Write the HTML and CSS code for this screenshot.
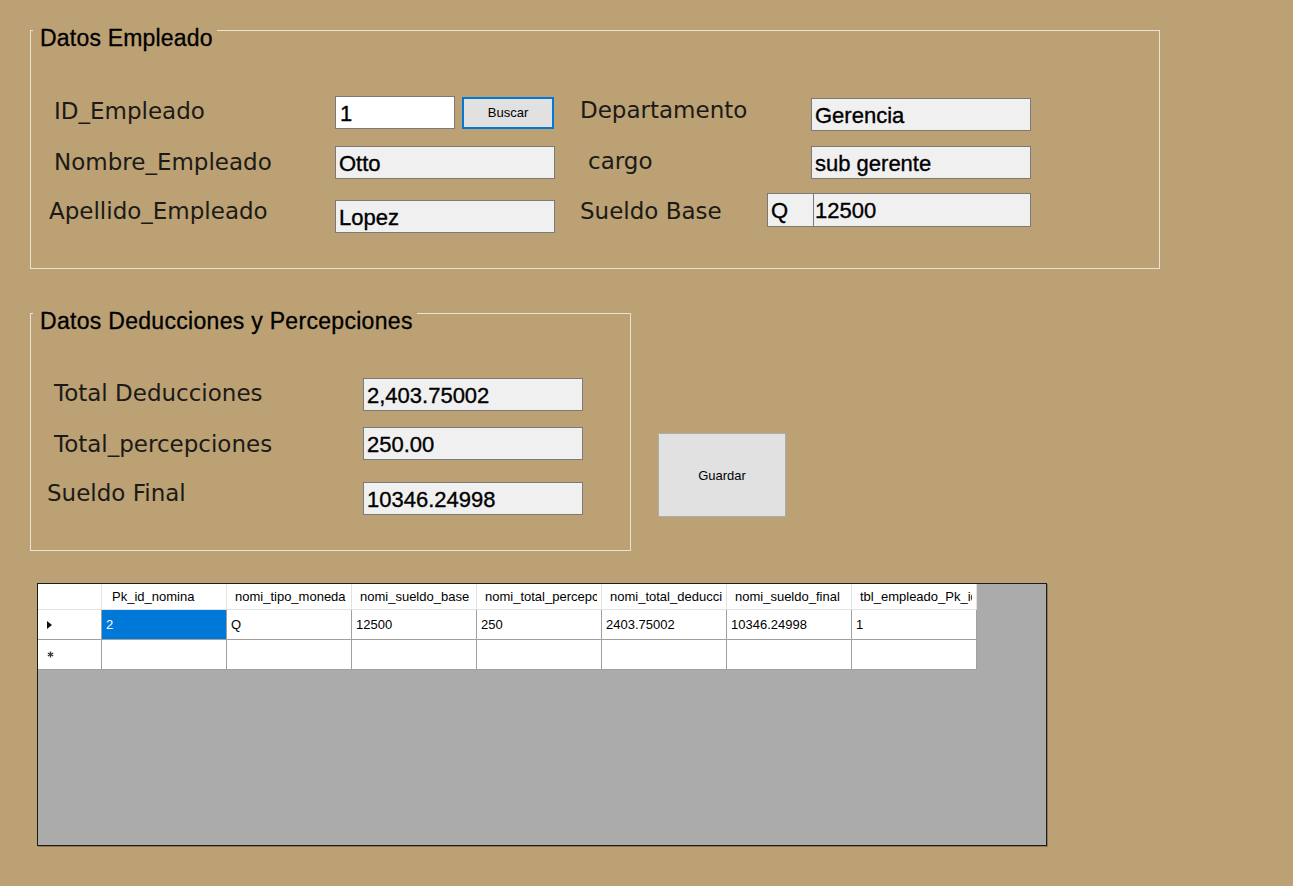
FILE: index.html
```html
<!DOCTYPE html>
<html lang="es">
<head>
<meta charset="utf-8">
<title>Nómina</title>
<link rel="stylesheet" href="styles.css">
</head>
<body>
<div class="page">
  <section class="group emp">
    <div class="group-title">Datos Empleado</div>
    <div class="col">
      <div class="row">
        <span class="lbl lbl-l lift-2">ID_Empleado</span>
        <div class="tb tb-id white">1</div>
        <button class="btn btn-search">Buscar</button>
      </div>
      <div class="row gap17">
        <span class="lbl lbl-l">Nombre_Empleado</span>
        <div class="tb tb-w">Otto</div>
      </div>
      <div class="row gap21">
        <span class="lbl lbl-l2 lift-5">Apellido_Empleado</span>
        <div class="tb tb-w">Lopez</div>
      </div>
    </div>
    <div class="col col-right">
      <div class="row">
        <span class="lbl lbl-r lift-4">Departamento</span>
        <div class="tb tb-w">Gerencia</div>
      </div>
      <div class="row gap15">
        <span class="lbl lbl-r2 lift-2">cargo</span>
        <div class="tb tb-w">sub gerente</div>
      </div>
      <div class="row row-tall gap14">
        <span class="lbl lbl-r3 drop-1">Sueldo Base</span>
        <div class="tb tb-q">Q</div>
        <div class="tb tb-amount">12500</div>
      </div>
    </div>
  </section>

  <div class="lower">
    <section class="group ded">
      <div class="group-title title-wide">Datos Deducciones y Percepciones</div>
      <div class="row">
        <span class="lbl lbl-d lift-2">Total Deducciones</span>
        <div class="tb tb-w">2,403.75002</div>
      </div>
      <div class="row gap16">
        <span class="lbl lbl-d drop-1">Total_percepciones</span>
        <div class="tb tb-w">250.00</div>
      </div>
      <div class="row gap22">
        <span class="lbl lbl-d2 lift-5">Sueldo Final</span>
        <div class="tb tb-w">10346.24998</div>
      </div>
    </section>
    <button class="btn btn-save">Guardar</button>
  </div>

  <div class="grid">
    <div class="grid-table">
      <div class="corner"></div>
      <div class="hc hc-first"><span class="hc-text">Pk_id_nomina</span></div>
      <div class="hc"><span class="hc-text">nomi_tipo_moneda</span></div>
      <div class="hc"><span class="hc-text">nomi_sueldo_base</span></div>
      <div class="hc"><span class="hc-text">nomi_total_percepciones</span></div>
      <div class="hc"><span class="hc-text">nomi_total_deducciones</span></div>
      <div class="hc"><span class="hc-text">nomi_sueldo_final</span></div>
      <div class="hc"><span class="hc-text">tbl_empleado_Pk_id_empleado</span></div>

      <div class="rh">
        <svg class="arrow" width="5" height="8" viewBox="0 0 5 8"><polygon points="0,0 5,4 0,8" fill="#111"/></svg>
      </div>
      <div class="c sel">2</div>
      <div class="c">Q</div>
      <div class="c">12500</div>
      <div class="c">250</div>
      <div class="c">2403.75002</div>
      <div class="c">10346.24998</div>
      <div class="c">1</div>

      <div class="rh">
        <svg class="star" width="7" height="7" viewBox="0 0 7 7"><g stroke="#333" stroke-width="1.3"><line x1="3.5" y1="0.5" x2="3.5" y2="6.5"/><line x1="0.8" y1="2" x2="6.2" y2="5"/><line x1="0.8" y1="5" x2="6.2" y2="2"/></g></svg>
      </div>
      <div class="c"></div>
      <div class="c"></div>
      <div class="c"></div>
      <div class="c"></div>
      <div class="c"></div>
      <div class="c"></div>
      <div class="c"></div>
    </div>
  </div>
</div>
</body>
</html>
```

FILE: styles.css
```css
* {
  box-sizing: border-box;
  margin: 0;
  padding: 0;
}

html, body {
  width: 1293px;
  height: 886px;
  overflow: hidden;
}

body {
  background: #bba174;
  font-family: "Liberation Sans", Arial, sans-serif;
  color: #000;
}

.page {
  padding-top: 30px;
}

/* group boxes */
.group {
  position: relative;
  border: 1px solid #e9e2d5;
}

.group-title {
  position: absolute;
  top: -5px;
  left: 2px;
  padding: 0 4px 0 7px;
  background: #bba174;
  font-size: 23px;
  line-height: 24px;
  letter-spacing: 0.2px;
  color: #000;
  white-space: nowrap;
  -webkit-text-stroke: 0.3px #000;
}

.title-wide {
  letter-spacing: 0.3px;
}

.emp {
  margin-left: 30px;
  width: 1130px;
  height: 239px;
  padding-top: 65px;
  display: grid;
  grid-template-columns: 549px 1fr;
  align-items: start;
}

.col {
  display: flex;
  flex-direction: column;
}

.col-right {
  padding-top: 2px;
}

.row {
  display: flex;
  align-items: center;
  height: 33px;
}

.row-tall {
  height: 34px;
}

.gap14 { margin-top: 14px; }
.gap15 { margin-top: 15px; }
.gap16 { margin-top: 16px; }
.gap17 { margin-top: 17px; }
.gap21 { margin-top: 21px; }
.gap22 { margin-top: 22px; }

/* labels */
.lbl {
  flex: none;
  font-family: "DejaVu Sans", "Noto Sans", sans-serif;
  font-size: 23px;
  line-height: 27px;
  color: #1c1a16;
  white-space: nowrap;
}

.lift-2 { margin-bottom: 3px; }
.lift-4 { margin-bottom: 9px; }
.lift-5 { margin-bottom: 11px; }
.drop-1 { margin-top: 2px; }

.lbl-l { margin-left: 23px; width: 281px; }
.lbl-l2 { margin-left: 18px; width: 286px; }
.lbl-r { width: 231px; }
.lbl-r2 { margin-left: 8px; width: 223px; }
.lbl-r3 { width: 187px; }
.lbl-d { margin-left: 23px; width: 309px; }
.lbl-d2 { margin-left: 16px; width: 316px; }

/* text boxes */
.tb {
  flex: none;
  height: 33px;
  border: 1px solid #7a7a7a;
  background: #f0f0f0;
  font-size: 22px;
  line-height: 29px;
  padding: 2px 3px 0;
  white-space: nowrap;
  overflow: hidden;
  color: #000;
  -webkit-text-stroke: 0.35px #000;
}

.row-tall .tb {
  height: 34px;
}

.white {
  background: #fff;
}

.tb-id { width: 120px; padding-left: 4px; }
.tb-w { width: 220px; }
.tb-q { width: 47px; }
.tb-amount { width: 218px; margin-left: -1px; padding-left: 1px; }

/* buttons */
.btn {
  flex: none;
  font-family: "Liberation Sans", Arial, sans-serif;
  font-size: 13px;
  color: #000;
  background: #e1e1e1;
  border: 1px solid #adadad;
}

.btn-search {
  margin-left: 7px;
  width: 92px;
  height: 32px;
  border: 2px solid #0078d7;
}

/* lower area */
.lower {
  display: flex;
  align-items: flex-start;
  margin-top: 44px;
}

.ded {
  margin-left: 30px;
  width: 601px;
  height: 238px;
  padding-top: 64px;
  display: flex;
  flex-direction: column;
}

.btn-save {
  margin-left: 27px;
  margin-top: 120px;
  width: 128px;
  height: 84px;
}

/* data grid */
.grid {
  margin: 32px 0 0 37px;
  width: 1010px;
  height: 263px;
  border: 1px solid #1b1b1b;
  background: #ababab;
  box-shadow: 1px 1px 0 rgba(60, 45, 20, 0.35);
}

.grid-table {
  display: grid;
  grid-template-columns: 64px repeat(7, 125px);
  grid-template-rows: 26px 30px 30px;
  width: 939px;
}

.corner,
.hc {
  background: #fff;
  border-right: 1px solid #e2e2e2;
  border-bottom: 1px solid #e2e2e2;
}

.hc {
  font-size: 13px;
  line-height: 25px;
  padding: 0 4px 0 8px;
}

.hc-text {
  display: block;
  white-space: nowrap;
  overflow: hidden;
}

.hc-first {
  padding-left: 10px;
}

.rh {
  background: #fff;
  border-right: 1px solid #a0a0a0;
  border-bottom: 1px solid #a0a0a0;
  display: flex;
  align-items: center;
  padding-left: 9px;
}

.c {
  background: #fff;
  border-right: 1px solid #a0a0a0;
  border-bottom: 1px solid #a0a0a0;
  font-size: 13px;
  line-height: 29px;
  padding-left: 4px;
  white-space: nowrap;
  overflow: hidden;
  color: #000;
}

.c.sel {
  background: #0078d7;
  color: #fff;
}
```
